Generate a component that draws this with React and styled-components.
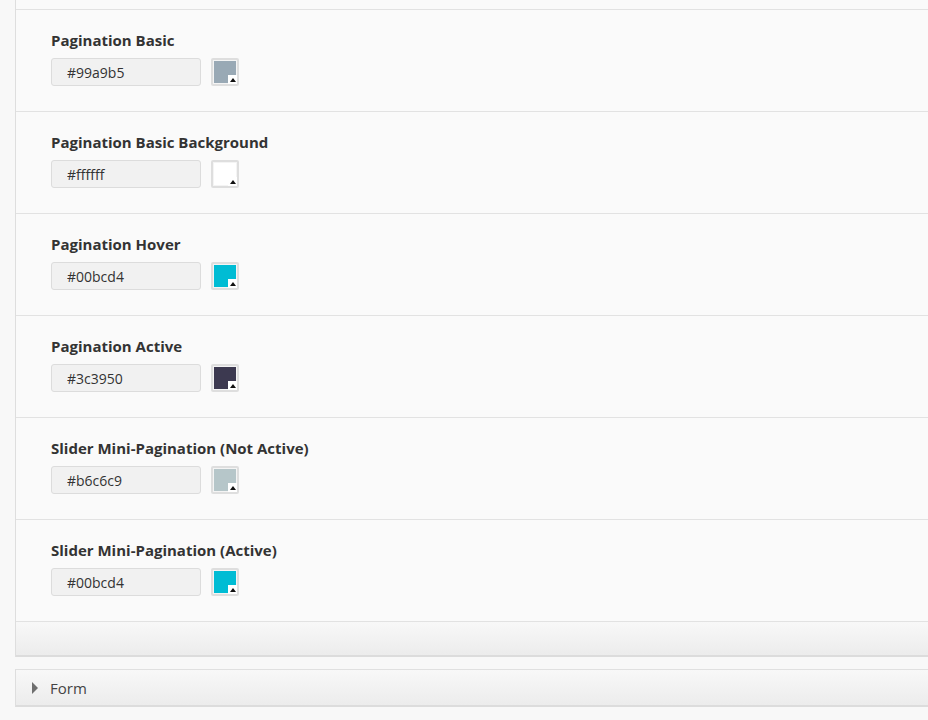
import React from 'react';
import styled, { createGlobalStyle } from 'styled-components';

const colors = [
  { label: 'Pagination Basic', value: '#99a9b5' },
  { label: 'Pagination Basic Background', value: '#ffffff' },
  { label: 'Pagination Hover', value: '#00bcd4' },
  { label: 'Pagination Active', value: '#3c3950' },
  { label: 'Slider Mini-Pagination (Not Active)', value: '#b6c6c9' },
  { label: 'Slider Mini-Pagination (Active)', value: '#00bcd4' },
];

export default function App() {
  return (
    <>
      <Global />
      <Page>
        <Panel>
          <TopStub />
          {colors.map((c) => (
            <Row key={c.label}>
              <Label>{c.label}</Label>
              <Controls>
                <Input readOnly value={c.value} />
                <Swatch>
                  <SwatchColor color={c.value}>
                    <Notch />
                  </SwatchColor>
                </Swatch>
              </Controls>
            </Row>
          ))}
          <Footer />
        </Panel>
        <Section>
          <Arrow />
          <SectionTitle>Form</SectionTitle>
        </Section>
      </Page>
    </>
  );
}

const Global = createGlobalStyle`
body {
  margin: 0;
  background: #f8f8f8;
  font-family: "Open Sans", "Liberation Sans", sans-serif;
  overflow: hidden;
}
`;

const Page = styled.div`
padding-left: 15px;
height: 720px;
`;

const Panel = styled.div`
border-left: 1px solid #dedede;
background: #fafafa;
`;

const TopStub = styled.div`
height: 9px;
border-bottom: 1px solid #e2e2e2;
`;

const Row = styled.div`
display: flex;
flex-direction: column;
padding: 20px 0 25px 35px;
border-bottom: 1px solid #e2e2e2;
`;

const Label = styled.div`
font-size: 15px;
font-weight: 700;
line-height: 20px;
color: #333;
margin-bottom: 8px;
`;

const Controls = styled.div`
display: flex;
align-items: center;
gap: 10px;
`;

const Input = styled.input`
box-sizing: border-box;
width: 150px;
height: 28px;
padding: 0 0 0 15px;
border: 1px solid #dcdcdc;
border-radius: 3px;
background: #f1f1f1;
font-family: "Open Sans", "Liberation Sans", sans-serif;
font-size: 14px;
color: #333;
outline: none;
`;

const Swatch = styled.div`
box-sizing: border-box;
width: 28px;
height: 28px;
padding: 2px;
border-radius: 2px;
background: #dedede;
`;

const SwatchColor = styled.div`
position: relative;
box-sizing: border-box;
width: 24px;
height: 24px;
border: 1px solid #f4f4f4;
background: ${(p) => p.color};
`;

const Notch = styled.div`
position: absolute;
right: -1px;
bottom: -1px;
width: 9px;
height: 9px;
background: #fff;
&::after {
  content: "";
  position: absolute;
  left: 2px;
  top: 3px;
  border-left: 3px solid transparent;
  border-right: 3px solid transparent;
  border-bottom: 4px solid #111;
}
`;

const Footer = styled.div`
height: 33px;
background: linear-gradient(#f8f8f8, #ececec);
border-bottom: 2px solid #dcdcdc;
`;

const Section = styled.div`
display: flex;
align-items: center;
margin-top: 12px;
height: 35px;
padding-left: 16px;
border-top: 1px solid #e0e0e0;
border-left: 1px solid #dedede;
border-bottom: 2px solid #dcdcdc;
background: linear-gradient(#f8f8f8, #ececec);
`;

const Arrow = styled.div`
width: 0;
height: 0;
border-top: 6px solid transparent;
border-bottom: 6px solid transparent;
border-left: 6px solid #6e6e6e;
margin-right: 12px;
`;

const SectionTitle = styled.span`
font-size: 15px;
color: #444;
`;
